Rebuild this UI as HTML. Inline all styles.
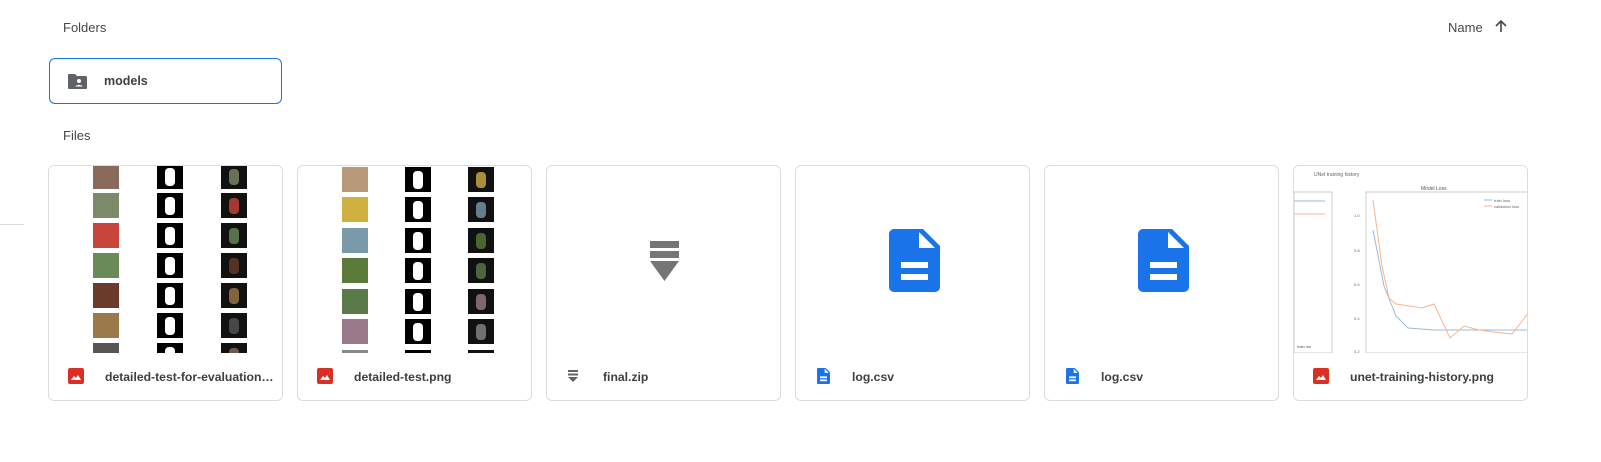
<!DOCTYPE html>
<html><head><meta charset="utf-8">
<style>
*{box-sizing:border-box;margin:0;padding:0}
body{width:1601px;height:462px;background:#fff;font-family:"Liberation Sans",Arial,sans-serif;position:relative;overflow:hidden;color:#3c4043}
.h{position:absolute;font-size:13px;color:#444746}
.folder{position:absolute;left:49px;top:58px;width:233px;height:46px;border:1px solid #1a73e8;border-radius:6px}
.folder span{position:absolute;left:54px;top:15px;font-size:12.5px;font-weight:bold;color:#3c4043}
.card{position:absolute;top:165px;width:235px;height:236px;border:1px solid #dadce0;border-radius:6px;overflow:hidden}
.thumb{position:absolute;left:0;top:0;width:100%;height:187px;overflow:hidden}
.name{position:absolute;left:56px;top:204px;font-size:12.2px;font-weight:bold;color:#3c4043;white-space:nowrap}
.ic{position:absolute;left:19px;top:202px}
.t{position:absolute;width:26px;height:25px}
</style></head><body>
<div class="h" style="left:63px;top:20px">Folders</div>
<div class="h" style="left:1448px;top:20px">Name</div>
<svg style="position:absolute;left:1494px;top:19px" width="14" height="14" viewBox="0 0 14 14"><path d="M7 13V2M2 7l5-5 5 5" stroke="#444746" stroke-width="1.6" fill="none"/></svg>
<div class="folder">
<svg style="position:absolute;left:17px;top:14px" width="21" height="17" viewBox="0 0 21 17"><path d="M1 2a1 1 0 0 1 1-1h6l2 2h9a1 1 0 0 1 1 1v11a1 1 0 0 1-1 1H2a1 1 0 0 1-1-1z" fill="#5f6368"/><circle cx="12" cy="8" r="2" fill="#fff"/><path d="M8.5 13.5c0-2 7-2 7 0z" fill="#fff"/></svg>
<span>models</span></div>
<div class="h" style="left:63px;top:128px">Files</div>
<div style="position:absolute;left:0;top:224px;width:24px;height:1px;background:#dadce0"></div>

<div class="card" style="left:48px"><div class="thumb" id="g1"></div>
<svg class="ic" width="16" height="16" viewBox="0 0 16 16"><rect width="16" height="16" rx="2" fill="#d93025"/><path d="M3 12l3-4 2 2 2-3 3 5z" fill="#fff"/></svg>
<div class="name">detailed-test-for-evaluation…</div></div>

<div class="card" style="left:297px"><div class="thumb" id="g2"></div>
<svg class="ic" width="16" height="16" viewBox="0 0 16 16"><rect width="16" height="16" rx="2" fill="#d93025"/><path d="M3 12l3-4 2 2 2-3 3 5z" fill="#fff"/></svg>
<div class="name">detailed-test.png</div></div>

<div class="card" style="left:546px">
<svg style="position:absolute;left:103px;top:75px" width="29" height="41" viewBox="0 0 29 41"><rect x="0" y="0" width="29" height="7" fill="#757575"/><rect x="0" y="10" width="29" height="7" fill="#757575"/><path d="M0 20h29L14.5 40z" fill="#757575"/></svg>
<svg class="ic" style="left:21px;top:204px" width="10" height="13" viewBox="0 0 10 13"><rect width="10" height="2" fill="#5f6368"/><rect y="3.5" width="10" height="2" fill="#5f6368"/><path d="M0 7h10L5 12z" fill="#5f6368"/></svg>
<div class="name">final.zip</div></div>

<div class="card" style="left:795px">
<svg style="position:absolute;left:93px;top:63px" width="51" height="63" viewBox="0 0 51 63"><path d="M5 0h29l17 17v41a5 5 0 0 1-5 5H5a5 5 0 0 1-5-5V5a5 5 0 0 1 5-5z" fill="#1a73e8"/><path d="M30 3v16h16z" fill="#fff"/><rect x="12" y="33" width="27" height="6" fill="#fff"/><rect x="12" y="45" width="27" height="6" fill="#fff"/></svg>
<svg class="ic" style="left:21px;top:202px" width="13" height="16" viewBox="0 0 51 63"><path d="M5 0h29l17 17v41a5 5 0 0 1-5 5H5a5 5 0 0 1-5-5V5a5 5 0 0 1 5-5z" fill="#1a73e8"/><path d="M30 3v16h16z" fill="#fff"/><rect x="12" y="33" width="27" height="7" fill="#fff"/><rect x="12" y="45" width="27" height="7" fill="#fff"/></svg>
<div class="name">log.csv</div></div>

<div class="card" style="left:1044px">
<svg style="position:absolute;left:93px;top:63px" width="51" height="63" viewBox="0 0 51 63"><path d="M5 0h29l17 17v41a5 5 0 0 1-5 5H5a5 5 0 0 1-5-5V5a5 5 0 0 1 5-5z" fill="#1a73e8"/><path d="M30 3v16h16z" fill="#fff"/><rect x="12" y="33" width="27" height="6" fill="#fff"/><rect x="12" y="45" width="27" height="6" fill="#fff"/></svg>
<svg class="ic" style="left:21px;top:202px" width="13" height="16" viewBox="0 0 51 63"><path d="M5 0h29l17 17v41a5 5 0 0 1-5 5H5a5 5 0 0 1-5-5V5a5 5 0 0 1 5-5z" fill="#1a73e8"/><path d="M30 3v16h16z" fill="#fff"/><rect x="12" y="33" width="27" height="7" fill="#fff"/><rect x="12" y="45" width="27" height="7" fill="#fff"/></svg>
<div class="name">log.csv</div></div>

<div class="card" style="left:1293px"><div class="thumb">
<svg width="235" height="187" viewBox="0 0 235 187" style="font-family:'Liberation Sans',sans-serif">
<text x="20" y="10" font-size="5" fill="#666">UNet training history</text>
<rect x="0" y="26" width="38" height="161" fill="none" stroke="#ccc"/>
<line x1="0" y1="35" x2="31" y2="35" stroke="#9bb8dc"/><line x1="0" y1="48" x2="31" y2="48" stroke="#fbb38c"/>
<text x="3" y="182" font-size="4" fill="#555">train iou</text>
<rect x="72" y="26" width="170" height="161" fill="none" stroke="#ccc"/>
<text x="127" y="24" font-size="5" fill="#555">Model Loss</text>
<text x="60" y="51" font-size="4" fill="#666">1.0</text><text x="60" y="86" font-size="4" fill="#666">0.8</text><text x="60" y="120" font-size="4" fill="#666">0.6</text><text x="60" y="154" font-size="4" fill="#666">0.4</text><text x="60" y="187" font-size="4" fill="#666">0.2</text>
<polyline points="79,64 90,120 102,150 114,162 140,164 235,164" fill="none" stroke="#9bb8dc" stroke-width="1"/>
<polyline points="79,34 88,100 95,132 102,138 115,140 128,142 140,138 156,172 170,160 185,164 200,166 218,168 235,146" fill="none" stroke="#fbb38c" stroke-width="1"/>
<line x1="190" y1="34" x2="198" y2="34" stroke="#9bb8dc"/><text x="200" y="36" font-size="4" fill="#666">train loss</text>
<line x1="190" y1="40" x2="198" y2="40" stroke="#fbb38c"/><text x="200" y="42" font-size="4" fill="#666">validation loss</text>
</svg></div>
<svg class="ic" width="16" height="16" viewBox="0 0 16 16"><rect width="16" height="16" rx="2" fill="#d93025"/><path d="M3 12l3-4 2 2 2-3 3 5z" fill="#fff"/></svg>
<div class="name">unet-training-history.png</div></div>

<script>
function grid(id,cols,tops,photos){
 var g=document.getElementById(id),h='';
 for(var r=0;r<tops.length;r++){for(var c=0;c<3;c++){
  var col=c==0?photos[r%photos.length]:(c==1?'#000':'#111');
  var inner='';
  if(c==1) inner='<div style="position:absolute;left:8px;top:4px;width:10px;height:18px;background:#fff;border-radius:4px"></div>';
  if(c==2) inner='<div style="position:absolute;left:8px;top:5px;width:10px;height:16px;background:'+photos[(r+1)%photos.length]+';border-radius:4px;opacity:.8"></div>';
  h+='<div class="t" style="left:'+cols[c]+'px;top:'+tops[r]+'px;background:'+col+'">'+inner+'</div>';}}
 g.innerHTML=h;}
grid('g1',[44,108,172],[-2,27,57,87,117,147,177],['#8a6a5a','#7d8a6a','#c8453a','#6a8a5a','#6a3a2a','#9a7a4a','#555']);
grid('g2',[44,107,170],[1,31,62,92,123,153,184],['#b89a7a','#d0b040','#7a9aaa','#5a7a3a','#5a7a4a','#9a7a8a','#888']);
</script>
</body></html>
